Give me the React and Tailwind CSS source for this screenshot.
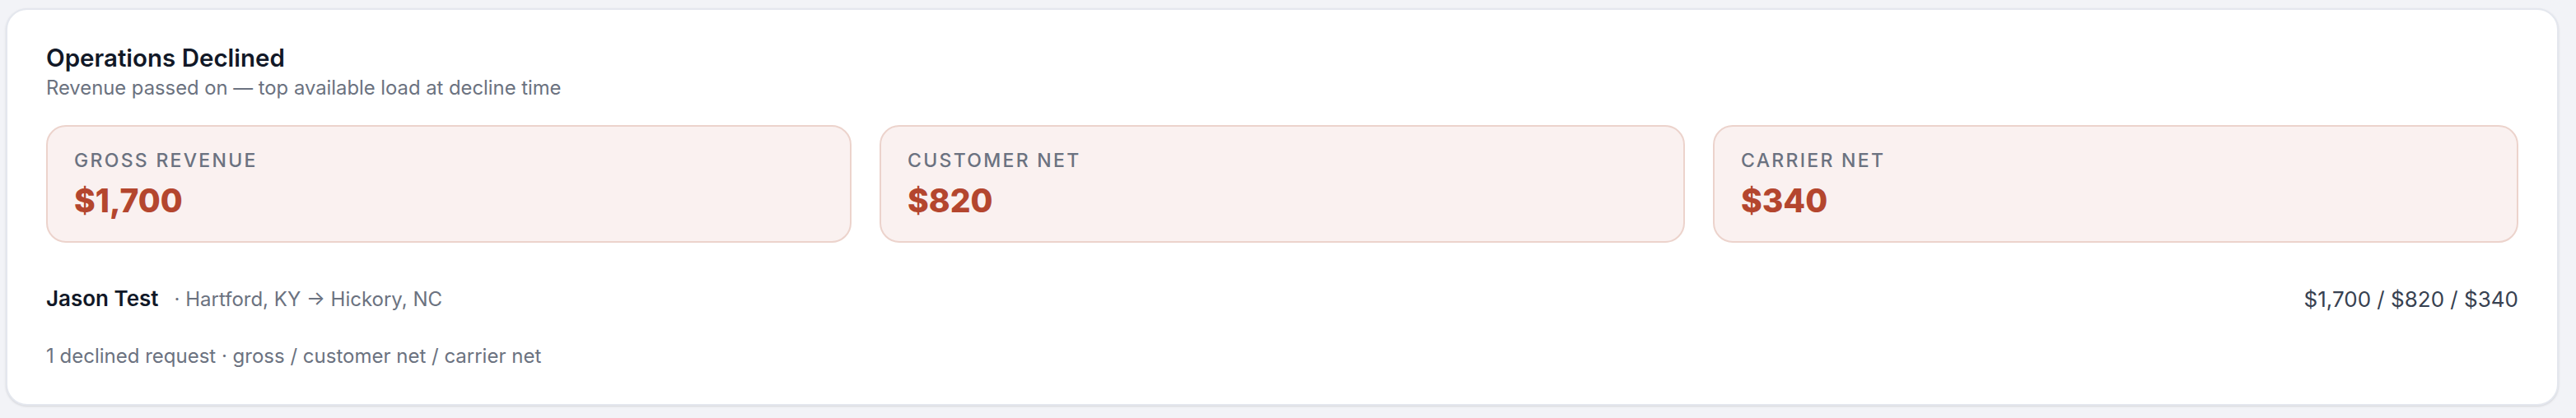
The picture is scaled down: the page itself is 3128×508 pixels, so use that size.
const stats = [
  { label: 'Gross Revenue', value: '$1,700' },
  { label: 'Customer Net', value: '$820' },
  { label: 'Carrier Net', value: '$340' },
];

function StatBox({ label, value }) {
  return (
    <div className="rounded-[24px] border-2 border-[#ecd3cc] bg-[#faf1f0] px-[32px] pt-[26px] pb-[28px]">
      <div className="text-[23px] leading-[30px] font-medium uppercase tracking-[0.1em] text-[#6b7280]">
        {label}
      </div>
      <div className="mt-[13px] text-[39px] leading-[42px] font-extrabold text-[#b4462e]">
        {value}
      </div>
    </div>
  );
}

export default function App() {
  return (
    <div
      className="min-h-[508px] w-full bg-[#f2f3f7] pt-[10px] pl-[7px]"
      style={{ fontFamily: 'Inter, "Noto Sans", sans-serif' }}
    >
      <div className="w-[3100px] rounded-[26px] border-2 border-[#e4e7ee] bg-white px-[47px] pt-[40px] pb-[42px] shadow-sm">
        <h2 className="text-[29.5px] leading-[36px] font-semibold text-[#111827]">
          Operations Declined
        </h2>
        <p className="mt-[3px] text-[23.8px] leading-[32px] text-[#6b7280]">
          Revenue passed on — top available load at decline time
        </p>

        <div className="mt-[29px] grid grid-cols-3 gap-[34px]">
          {stats.map((s) => (
            <StatBox key={s.label} label={s.label} value={s.value} />
          ))}
        </div>

        <div className="mt-[50px] flex items-center justify-between">
          <div className="flex items-baseline">
            <span className="text-[26px] leading-[36px] font-semibold text-[#111827]">Jason Test</span>
            <span className="ml-[19px] text-[24px] leading-[36px] text-[#6b7280]">
              · Hartford, KY → Hickory, NC
            </span>
          </div>
          <div className="text-[26px] leading-[36px] text-[#374151]">
            $1,700 / $820 / $340
          </div>
        </div>

        <p className="mt-[35px] text-[24px] leading-[32px] text-[#6b7280]">
          1 declined request · gross / customer net / carrier net
        </p>
      </div>
    </div>
  );
}
